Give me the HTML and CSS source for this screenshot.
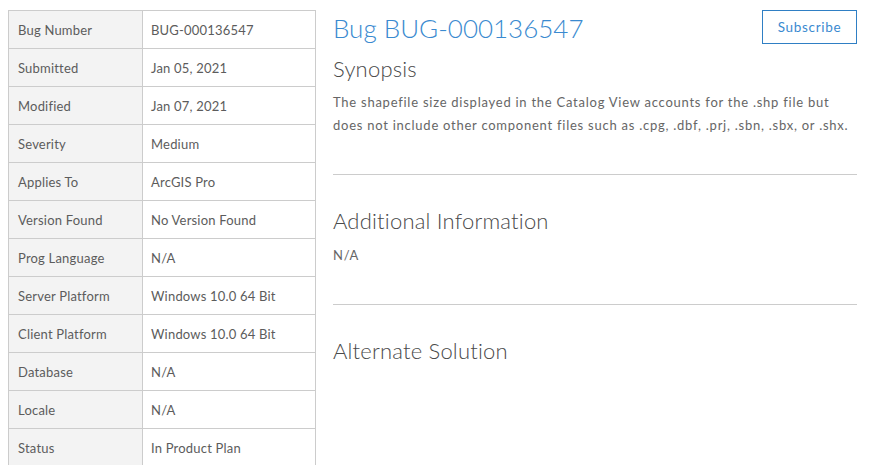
FILE: index.html
```html
<!DOCTYPE html>
<html>
<head>
<meta charset="utf-8">
<link rel="stylesheet" href="styles.css">
</head>
<body>
<div class="page">
  <table class="facts">
    <tr><th>Bug Number</th><td>BUG-000136547</td></tr>
    <tr><th>Submitted</th><td>Jan 05, 2021</td></tr>
    <tr><th>Modified</th><td>Jan 07, 2021</td></tr>
    <tr><th>Severity</th><td>Medium</td></tr>
    <tr><th>Applies To</th><td>ArcGIS Pro</td></tr>
    <tr><th>Version Found</th><td>No Version Found</td></tr>
    <tr><th>Prog Language</th><td>N/A</td></tr>
    <tr><th>Server Platform</th><td>Windows 10.0 64 Bit</td></tr>
    <tr><th>Client Platform</th><td>Windows 10.0 64 Bit</td></tr>
    <tr><th>Database</th><td>N/A</td></tr>
    <tr><th>Locale</th><td>N/A</td></tr>
    <tr><th>Status</th><td>In Product Plan</td></tr>
  </table>
  <div class="main">
    <div class="head">
      <h1 class="title">Bug BUG-000136547</h1>
      <button class="subscribe">Subscribe</button>
    </div>
    <h2 class="section-title first">Synopsis</h2>
    <p class="text">The shapefile size displayed in the Catalog View accounts for the .shp file but does not include other component files such as .cpg, .dbf, .prj, .sbn, .sbx, or .shx.</p>
    <hr class="rule">
    <h2 class="section-title">Additional Information</h2>
    <p class="text small">N/A</p>
    <hr class="rule">
    <h2 class="section-title">Alternate Solution</h2>
  </div>
</div>
</body>
</html>
```

FILE: styles.css
```css
html, body {
  margin: 0;
  padding: 0;
  background: #fff;
}
body {
  font-family: Lato, "Open Sans", sans-serif;
  color: #595959;
  overflow: hidden;
}
.page {
  display: flex;
  align-items: flex-start;
  padding: 10px 20px 0 8px;
  gap: 17px;
}
.facts {
  border-collapse: collapse;
  width: 308px;
  flex: none;
  font-size: 13px;
  letter-spacing: 0.2px;
}
.facts th, .facts td {
  border: 1px solid #cccccc;
  height: 37px;
  padding: 0 0 0 9px;
  text-align: left;
  font-weight: normal;
  vertical-align: middle;
  color: #5c5c5c;
}
.facts th {
  width: 124px;
  background: #f3f3f3;
}
.facts td {
  padding-left: 8px;
}
.main {
  flex: 1;
  min-width: 0;
}
.head {
  display: flex;
  justify-content: space-between;
  align-items: flex-start;
}
.title {
  margin: 0;
  font-size: 26px;
  font-weight: 300;
  color: #3a8ad0;
  line-height: 34px;
  padding-top: 1px;
  letter-spacing: 0;
}
.subscribe {
  font-family: inherit;
  font-size: 13.5px;
  color: #3a8ad0;
  background: #fff;
  border: 1px solid #2f7fc4;
  height: 34px;
  width: 95px;
  padding: 0;
  letter-spacing: 0.7px;
}
.section-title {
  margin: 0;
  font-size: 22px;
  font-weight: 300;
  color: #4a4a4a;
  line-height: 30px;
  letter-spacing: 0.2px;
}
.section-title.first {
  margin-top: 9px;
}
.text {
  margin: 7px 0 0;
  font-size: 13px;
  line-height: 23px;
  letter-spacing: 0.75px;
  color: #666666;
}
.rule {
  border: 0;
  border-top: 1px solid #cccccc;
  margin: 37px 0 31px;
}
.text.small {
  margin-top: 8px;
}
```
